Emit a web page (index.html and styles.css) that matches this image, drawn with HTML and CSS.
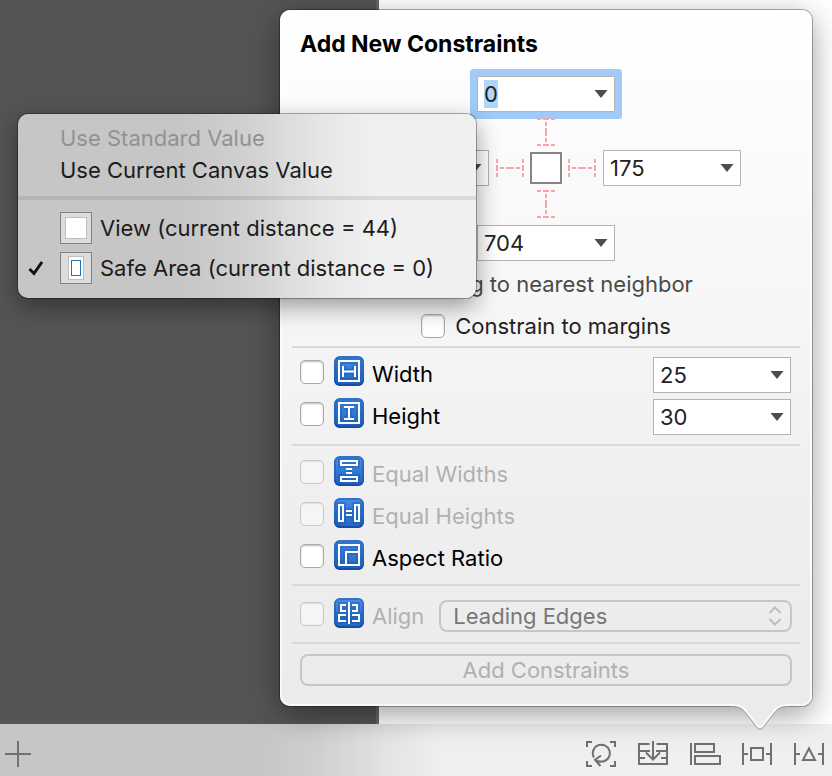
FILE: index.html
```html
<!DOCTYPE html>
<html lang="en">
<head>
<meta charset="utf-8">
<meta name="viewport" content="width=device-width, initial-scale=1">
<title>Add New Constraints</title>
<link rel="stylesheet" href="styles.css">
</head>
<body>
<svg class="defs" aria-hidden="true">
  <defs>
    <symbol id="g-width" viewBox="0 0 30 30"><path d="M5 5H25V25H5ZM9 10V21M21 10V21M9 15.500H21"/></symbol>
    <symbol id="g-height" viewBox="0 0 30 30"><path d="M5 5H25V25H5ZM10 9H20M10 21H20M15 9V21"/></symbol>
    <symbol id="g-eqw" viewBox="0 0 30 30"><path d="M7 5H23V9H7ZM7 21H23V25H7ZM12 13H18M12 17H18"/></symbol>
    <symbol id="g-eqh" viewBox="0 0 30 30"><path d="M5 7H9V23H5ZM21 7H25V23H21ZM12 13H18M12 17H18"/></symbol>
    <symbol id="g-ratio" viewBox="0 0 30 30"><path d="M5 5H25V25H5ZM12 25V12H25"/></symbol>
    <symbol id="g-align" viewBox="0 0 30 30"><path d="M15 4V26M12 7H7V13H12M12 17H5V23H12M18 7H23V13H18M18 17H25V23H18"/></symbol>
    <symbol id="arrow" viewBox="0 0 14 8"><path d="M0.500 0H13.500L7 8Z"/></symbol>
  </defs>
</svg>

<div class="app">
  <main class="canvas">
    <div class="outside"></div>
    <div class="page"></div>
  </main>

  <footer class="toolbar">
    <button class="tool" type="button" aria-label="Add"><svg viewBox="0 0 32 28"><path d="M3 14H29M16 1V27"/></svg></button>
    <div class="tools">
      <button class="tool" type="button" aria-label="Update frames"><svg viewBox="0 0 32 28"><path d="M2 7V2H7M25 2H30V7M2 21V26H7M25 26H30V21M9 17.500A8.500 8.500 0 1 1 18 21.500Q14.500 22 10.500 20.500M16 15.500L10 20L15.500 26"/></svg></button>
      <button class="tool" type="button" aria-label="Embed in stack"><svg viewBox="0 0 32 28"><path d="M12.500 4H2V24H30V4H19.500M2 11H13M19 11H30M2 18H8M24 18H30M16 1V19M9 12.500L16 19.500L23 12.500"/></svg></button>
      <button class="tool" type="button" aria-label="Align"><svg viewBox="0 0 32 28"><path d="M2 3V25M6 4H25V12H6ZM6 16H31V24H6Z"/></svg></button>
      <button class="tool" type="button" aria-label="Add new constraints"><svg viewBox="0 0 32 28"><path d="M2 3V25M30 3V25M2 14H7M25 14H30M10 8H22V20H10Z"/></svg></button>
      <button class="tool" type="button" aria-label="Resolve layout issues"><svg viewBox="0 0 32 28"><path d="M2 3V25M30 3V25M2 14H7M25 14H30M16 8.500L22 20H10Z"/></svg></button>
    </div>
  </footer>

  <section class="popover" aria-label="Add New Constraints">
    <form class="panel">
      <h1 class="title">Add New Constraints</h1>

      <div class="spacing">
        <div class="combo combo-focus">
          <input type="text" value="0" aria-label="Top spacing">
          <button type="button" aria-label="Top options"><svg><use href="#arrow"/></svg></button>
        </div>
        <svg class="beam beam-top" viewBox="0 0 18 28" width="18" height="28"><path d="M0 1H4M6 1H12M14 1H18M0 27H4M6 27H12M14 27H18M9 4V8M9 10V18M9 20V24"/></svg>
        <div class="middle">
          <div class="combo">
            <input type="text" aria-label="Leading spacing">
            <button type="button" aria-label="Leading options"><svg><use href="#arrow"/></svg></button>
          </div>
          <div class="center">
            <svg viewBox="0 0 28 18" width="28" height="18" class="beam"><path d="M1 0V4M1 6V12M1 14V18M27 0V4M27 6V12M27 14V18M4 9H8M10 9H18M20 9H24"/></svg>
            <span class="box"></span>
            <svg viewBox="0 0 28 18" width="28" height="18" class="beam"><path d="M1 0V4M1 6V12M1 14V18M27 0V4M27 6V12M27 14V18M4 9H8M10 9H18M20 9H24"/></svg>
          </div>
          <div class="combo">
            <input type="text" value="175" aria-label="Trailing spacing">
            <button type="button" aria-label="Trailing options"><svg><use href="#arrow"/></svg></button>
          </div>
        </div>
        <svg class="beam beam-bottom" viewBox="0 0 18 28" width="18" height="28"><path d="M0 1H4M6 1H12M14 1H18M0 27H4M6 27H12M14 27H18M9 4V8M9 10V18M9 20V24"/></svg>
        <div class="combo">
          <input type="text" value="704" aria-label="Bottom spacing">
          <button type="button" aria-label="Bottom options"><svg><use href="#arrow"/></svg></button>
        </div>
      </div>

      <p class="caption">Spacing to nearest neighbor</p>
      <label class="margins"><input class="check" type="checkbox">Constrain to margins</label>

      <div class="group group-size">
        <div class="row">
          <input class="check" type="checkbox" id="c-width">
          <svg class="badge"><use class="halo" href="#g-width"/><use href="#g-width"/></svg>
          <label for="c-width">Width</label>
          <div class="combo">
            <input type="text" value="25" aria-label="Width value">
            <button type="button" aria-label="Width options"><svg><use href="#arrow"/></svg></button>
          </div>
        </div>
        <div class="row">
          <input class="check" type="checkbox" id="c-height">
          <svg class="badge"><use class="halo" href="#g-height"/><use href="#g-height"/></svg>
          <label for="c-height">Height</label>
          <div class="combo">
            <input type="text" value="30" aria-label="Height value">
            <button type="button" aria-label="Height options"><svg><use href="#arrow"/></svg></button>
          </div>
        </div>
      </div>

      <div class="group group-equal">
        <div class="row off">
          <input class="check" type="checkbox" id="c-eqw" disabled>
          <svg class="badge"><use class="halo" href="#g-eqw"/><use href="#g-eqw"/></svg>
          <label for="c-eqw">Equal Widths</label>
        </div>
        <div class="row off">
          <input class="check" type="checkbox" id="c-eqh" disabled>
          <svg class="badge"><use class="halo" href="#g-eqh"/><use href="#g-eqh"/></svg>
          <label for="c-eqh">Equal Heights</label>
        </div>
        <div class="row">
          <input class="check" type="checkbox" id="c-ratio">
          <svg class="badge"><use class="halo" href="#g-ratio"/><use href="#g-ratio"/></svg>
          <label for="c-ratio">Aspect Ratio</label>
        </div>
      </div>

      <div class="group group-align">
        <div class="row off">
          <input class="check" type="checkbox" id="c-align" disabled>
          <svg class="badge"><use class="halo" href="#g-align"/><use href="#g-align"/></svg>
          <label for="c-align">Align</label>
          <div class="popup">
            <select aria-label="Alignment" disabled><option>Leading Edges</option></select>
            <svg class="chevrons" viewBox="0 0 14 20" width="14" height="20"><path d="M1.500 7L7 1.500L12.500 7M1.500 13L7 18.500L12.500 13"/></svg>
          </div>
        </div>
      </div>

      <div class="group group-submit">
        <button class="submit" type="submit" disabled>Add Constraints</button>
      </div>
    </form>

    <svg class="tail" viewBox="0 0 60 30" width="60" height="30" aria-hidden="true">
      <path class="tail-fill" d="M0 0V5H2C9 5 12 7 16 12L27 26Q30 30 33 26L44 12C48 7 51 5 58 5H60V0Z"/>
      <path class="tail-light" d="M0 4H2C10 4 13 6 17 11L27.500 24.500Q30 28 32.500 24.500L43 11C47 6 50 4 58 4H60"/>
      <path class="tail-edge" d="M0 5.500H2C9 5.500 12 7.500 16 12.500L27 26.500Q30 30 33 26.500L44 12.500C48 7.500 51 5.500 58 5.500H60"/>
    </svg>

    <div class="menu" role="menu">
      <button class="item item-off" type="button" role="menuitem" disabled>Use Standard Value</button>
      <button class="item" type="button" role="menuitem">Use Current Canvas Value</button>
      <hr>
      <button class="item item-tall" type="button" role="menuitemradio" aria-checked="false">
        <svg class="thumb" viewBox="0 0 32 32"><rect class="t-frame" x=".5" y=".5" width="31" height="31"/><rect class="t-page" x="5.500" y="5.500" width="21" height="21"/></svg>
        View (current distance = 44)
      </button>
      <button class="item item-tall" type="button" role="menuitemradio" aria-checked="true">
        <svg class="tick" viewBox="0 0 16 16"><path d="M1.500 9L6 13.500L14 2"/></svg>
        <svg class="thumb" viewBox="0 0 32 32"><rect class="t-frame" x=".5" y=".5" width="31" height="31"/><rect class="t-page" x="8.500" y="4.500" width="15" height="23"/><rect class="t-safe" x="11.500" y="8.500" width="9" height="15"/></svg>
        Safe Area (current distance = 0)
      </button>
    </div>
  </section>
</div>
</body>
</html>
```
FILE: styles.css
```css
* { box-sizing: border-box; }

body {
  margin: 0;
  font: 22px/28px Inter, "Liberation Sans", sans-serif;
  color: #000;
}

button, input, select { font: inherit; color: inherit; margin: 0; }
button { padding: 0; border: 0; background: none; }
svg { display: block; flex: none; }
.defs { position: absolute; width: 0; height: 0; }

.app {
  position: relative;
  display: flex;
  flex-direction: column;
  min-height: 100vh;
  overflow: hidden;
}

.canvas { flex: 1; display: flex; }
.outside { width: 379px; background: #545454; border-right: 3px solid #666; }
.page { flex: 1; background: #fff; }

.toolbar {
  display: flex;
  align-items: center;
  justify-content: space-between;
  height: 52px;
  padding: 8px 7px 0 2px;
  background: linear-gradient(90deg, #c6c6c6 260px, #d0d0d0 320px, #e4e4e4 390px, #efefef 440px);
}
.tools { display: flex; gap: 20px; }
.tool svg { width: 32px; height: 28px; fill: none; stroke: #707070; stroke-width: 2; }

/* Popover */
.popover {
  position: absolute;
  right: 20px;
  bottom: 70px;
  width: 532px;
}
.panel {
  padding: 20px;
  border-radius: 10px;
  background: linear-gradient(#fff, #f7f7f7 40%, #efefef 70%, #ebebeb);
  box-shadow: inset 0 0 0 2px rgba(255, 255, 255, .7), 0 0 0 1px rgba(0, 0, 0, .3), 0 8px 30px rgba(0, 0, 0, .4);
}
.tail { position: absolute; right: 22px; bottom: -25px; }
.tail-fill { fill: #ebebeb; }
.tail-light { fill: none; stroke: #fafafa; stroke-width: 2; }
.tail-edge { fill: none; stroke: #999; }

.title { margin: 0 0 18px; font-size: 23px; line-height: 28px; font-weight: 700; }

.combo {
  display: flex;
  align-items: center;
  width: 138px;
  height: 36px;
  border: 1px solid #b3b3b3;
  background: #fff;
}
.combo input {
  flex: 1;
  min-width: 0;
  height: 28px;
  padding: 0 0 0 6px;
  border: 0;
  outline: 0;
  background: none;
  color: #222;
}
.combo button { width: 26px; height: 28px; }
.combo button svg { width: 14px; height: 8px; margin: auto; fill: #4d4d4d; }
.combo-focus { border-radius: 1px; box-shadow: 0 0 0 7px #9fcafa; }
.combo-focus input { background: linear-gradient(#b1d6fc, #b1d6fc) 6px 0 / 14px 28px no-repeat; }

.spacing { display: flex; flex-direction: column; align-items: center; }
.middle { display: flex; align-items: center; gap: 7px; }
.center { display: flex; align-items: center; gap: 6px; }
.box { width: 32px; height: 32px; border: 2px solid #868686; background: #fff; }
.beam { fill: none; stroke: #f9a4aa; stroke-width: 2; }
.beam-top { margin: 6px 0 4px; }
.beam-bottom { margin: 4px 0 7px; }

.caption { margin: 9px 0 14px; text-align: center; color: #4a4a4a; }
.margins {
  display: flex;
  align-items: center;
  justify-content: center;
  gap: 10px;
  margin-bottom: 6px;
  color: #222;
}

.check {
  appearance: none;
  flex: none;
  width: 24px;
  height: 24px;
  border: 1px solid #a8a8a8;
  border-radius: 5px;
  background: #fff;
  box-shadow: inset 0 1px 2px rgba(0, 0, 0, .25);
}
.check:disabled { border-color: #c8c8c8; background: #f5f5f5; box-shadow: inset 0 1px 1px rgba(0, 0, 0, .08); }

.group {
  display: flex;
  flex-direction: column;
  gap: 6px;
  margin: 0 -8px;
  padding: 10px 8px 8px;
  border-top: 2px solid #d9d9d9;
}
.group-size { padding: 8px 9px 10px 8px; }
.group-align { padding-top: 12px; }
.group-submit { padding-bottom: 0; }

.row { display: flex; align-items: flex-start; height: 36px; line-height: 36px; }
.row .check { margin: 4px 10px 0 0; }
.row .badge { margin-right: 8px; }
.row .combo { margin: 1px 0 0 auto; }
.off { color: #b1b1b1; }

.badge {
  width: 30px;
  height: 30px;
  border-radius: 6px;
  background: linear-gradient(#4a8ee6, #2f75d3 60%, #2566c0);
  box-shadow: inset 0 0 0 2px rgba(18, 74, 160, .4), inset 0 -2px 1px rgba(10, 60, 140, .5);
  fill: none;
  stroke: #fff;
  stroke-width: 2;
}
.halo { stroke: #1556ac; stroke-width: 6; opacity: .4; }

.popup { position: relative; flex: 1; margin: 2px 0 0 15px; line-height: 28px; }
.popup select {
  appearance: none;
  display: block;
  width: 100%;
  height: 32px;
  padding: 0 30px 0 12px;
  border: 2px solid #c6c6c6;
  border-radius: 8px;
  background: transparent;
  color: #777;
  opacity: 1;
}
.chevrons { position: absolute; right: 10px; top: 6px; fill: none; stroke: #bcbcbc; stroke-width: 2; }

.submit {
  height: 32px;
  border: 2px solid #c6c6c6;
  border-radius: 8px;
  color: #b0b0b0;
}

/* Contextual menu over the top spacing field */
.menu {
  position: absolute;
  top: 104px;
  left: -262px;
  display: flex;
  flex-direction: column;
  width: 458px;
  padding: 8px 0 10px;
  border-radius: 10px;
  background: linear-gradient(90deg, #c6c6c6 35%, #d0d0d0 50%, #e6e6e6 66%, #f0f0f0 78%);
  box-shadow: 0 0 0 1px rgba(0, 0, 0, .3), 0 8px 24px rgba(0, 0, 0, .4);
}
.menu hr { width: 100%; height: 4px; margin: 10px 0 8px; border: 0; background: rgba(0, 0, 0, .09); }
.item {
  position: relative;
  display: flex;
  align-items: center;
  gap: 8px;
  height: 32px;
  padding-left: 42px;
  color: #1c1c1c;
  white-space: nowrap;
}
.item-tall { height: 40px; }
.item-off { color: #929292; }
.thumb { width: 32px; height: 32px; }
.t-frame { fill: #dcdcdc; stroke: #828282; }
.t-page { fill: #fff; stroke: #bdbdbd; }
.t-safe { fill: #fff; stroke: #2273b5; }
.tick { position: absolute; left: 10px; width: 16px; height: 16px; fill: none; stroke: #111; stroke-width: 3; }
```
